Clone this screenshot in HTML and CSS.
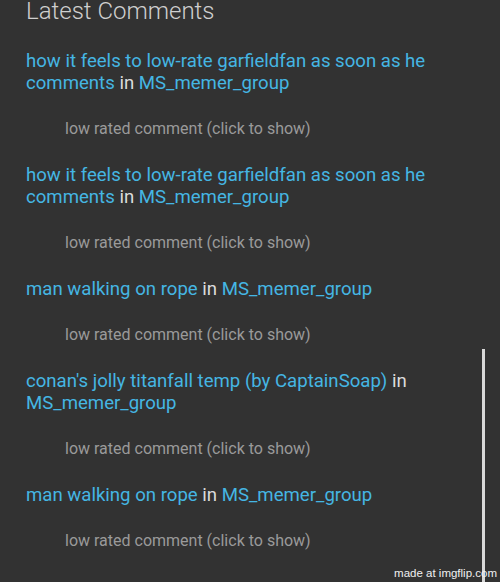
FILE: index.html
```html
<!DOCTYPE html>
<html lang="en">
<head>
    <meta charset="UTF-8">
    <meta name="viewport" content="width=device-width, initial-scale=1.0">
    <title>Latest Comments</title>
    <link rel="stylesheet" href="styles.css">
</head>
<body>
    <div class="page">
        <h2 class="title">Latest Comments</h2>

        <!-- COMMENT LIST -->
        <div class="entry">
            <div class="head"><a href="#" class="link">how it feels to low-rate garfieldfan as soon as he comments</a> in <a href="#" class="link">MS_memer_group</a></div>
            <div class="hidden">low rated comment (click to show)</div>
        </div>
        <div class="entry">
            <div class="head"><a href="#" class="link">how it feels to low-rate garfieldfan as soon as he comments</a> in <a href="#" class="link">MS_memer_group</a></div>
            <div class="hidden">low rated comment (click to show)</div>
        </div>
        <div class="entry">
            <div class="head"><a href="#" class="link">man walking on rope</a> in <a href="#" class="link">MS_memer_group</a></div>
            <div class="hidden">low rated comment (click to show)</div>
        </div>
        <div class="entry">
            <div class="head"><a href="#" class="link">conan's jolly titanfall temp (by CaptainSoap)</a> in <a href="#" class="link">MS_memer_group</a></div>
            <div class="hidden">low rated comment (click to show)</div>
        </div>
        <div class="entry">
            <div class="head"><a href="#" class="link">man walking on rope</a> in <a href="#" class="link">MS_memer_group</a></div>
            <div class="hidden">low rated comment (click to show)</div>
        </div>
    </div>

    <div class="scrollbar"></div>
    <div class="watermark">made at imgflip.com</div>
</body>
</html>
```

FILE: styles.css
```css
html, body {
    margin: 0;
    height: 100%;
    overflow: hidden;
}
body {
    font-family: Roboto, "Liberation Sans", sans-serif;
    background-color: #323232;
    color: #dcdcdc;
    position: relative;
}
.page {
    padding-left: 26px;
    width: 440px;
}
.title {
    margin: 0;
    font-size: 24px;
    font-weight: 300;
    line-height: 22px;
    color: #cfcfcf;
}
.entry {
    margin-top: 28px;
}
.entry + .entry {
    margin-top: 24px;
}
.head {
    font-size: 18.6px;
    line-height: 22px;
}
.link {
    color: #45b6e3;
    text-decoration: none;
}
.hidden {
    margin-top: 24px;
    padding-left: 39px;
    font-size: 16px;
    line-height: 22px;
    color: #9a9a9a;
    cursor: pointer;
}
.scrollbar {
    position: absolute;
    left: 482px;
    top: 349px;
    bottom: 0;
    width: 3px;
    background-color: #d8d8d8;
}
.watermark {
    position: absolute;
    right: 3px;
    bottom: 3px;
    font-family: "Liberation Sans", sans-serif;
    font-size: 11.5px;
    color: #f0f0f0;
}
```
